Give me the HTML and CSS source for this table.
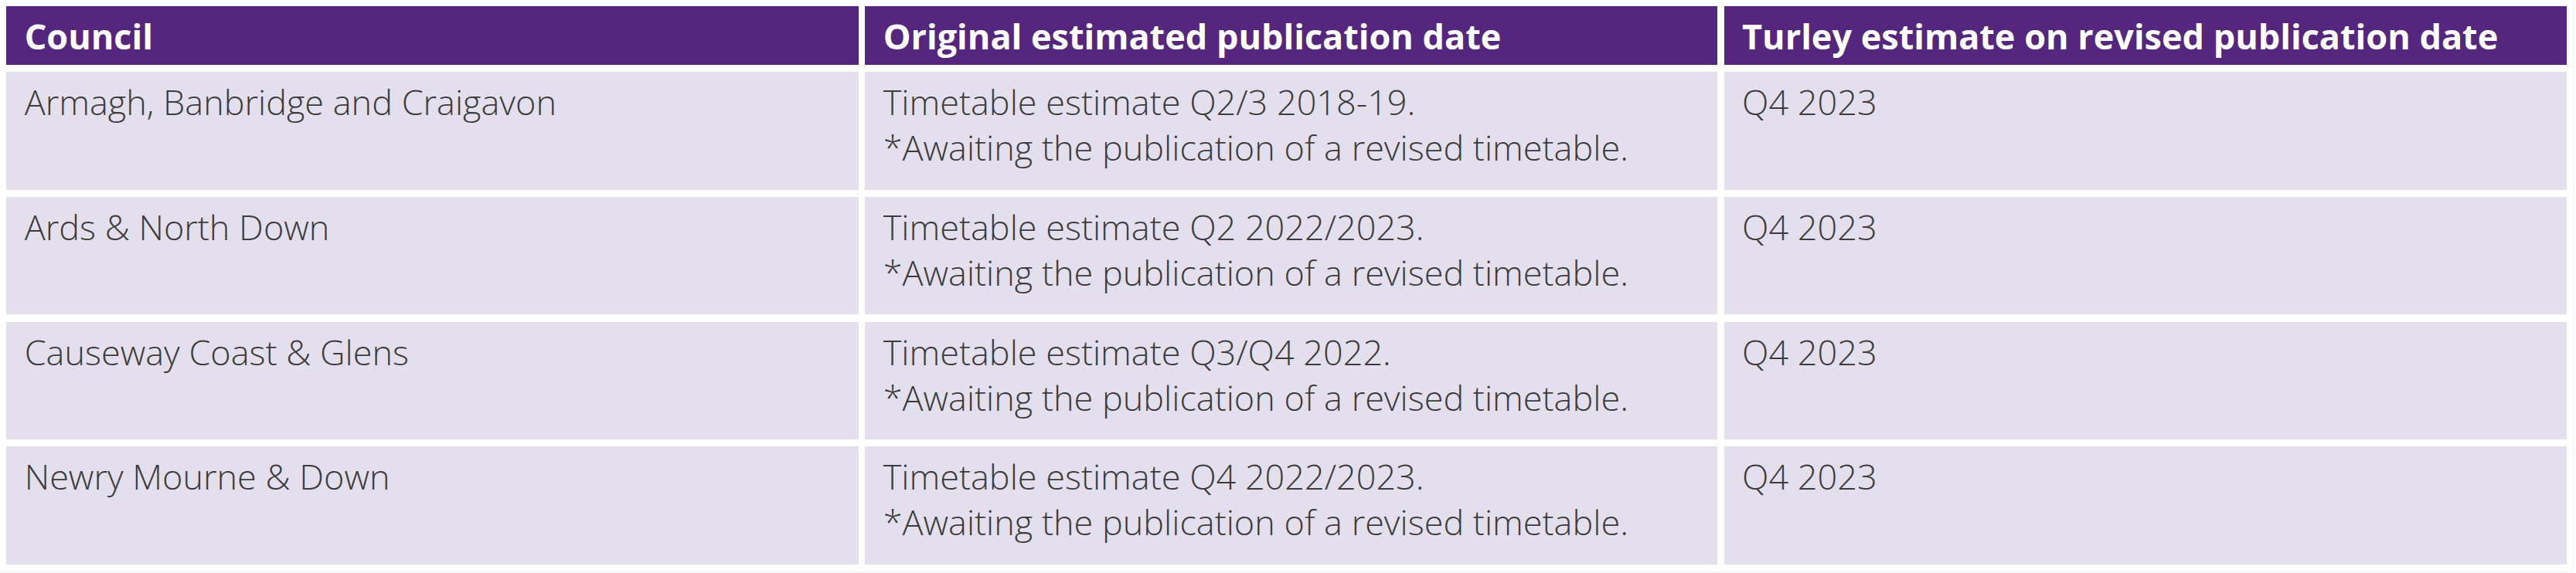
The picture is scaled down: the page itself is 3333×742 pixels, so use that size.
FILE: index.html
```html
<!DOCTYPE html>
<html lang="en">
<head>
<meta charset="utf-8">
<title>Local Development Plan timetable</title>
<link rel="stylesheet" href="styles.css">
</head>
<body>
<div class="table" role="table">
  <div class="cell head" role="columnheader">Council</div>
  <div class="cell head" role="columnheader">Original estimated publication date</div>
  <div class="cell head" role="columnheader">Turley estimate on revised publication date</div>

  <div class="cell" role="cell">Armagh, Banbridge and Craigavon</div>
  <div class="cell" role="cell">Timetable estimate Q2/3 2018-19.<br>*Awaiting the publication of a revised timetable.</div>
  <div class="cell" role="cell">Q4 2023</div>

  <div class="cell" role="cell">Ards &amp; North Down</div>
  <div class="cell" role="cell">Timetable estimate Q2 2022/2023.<br>*Awaiting the publication of a revised timetable.</div>
  <div class="cell" role="cell">Q4 2023</div>

  <div class="cell" role="cell">Causeway Coast &amp; Glens</div>
  <div class="cell" role="cell">Timetable estimate Q3/Q4 2022.<br>*Awaiting the publication of a revised timetable.</div>
  <div class="cell" role="cell">Q4 2023</div>

  <div class="cell" role="cell">Newry Mourne &amp; Down</div>
  <div class="cell" role="cell">Timetable estimate Q4 2022/2023.<br>*Awaiting the publication of a revised timetable.</div>
  <div class="cell" role="cell">Q4 2023</div>
</div>
</body>
</html>
```

FILE: styles.css
```css
html, body {
  margin: 0;
  padding: 0;
  background: #ffffff;
}

.table {
  display: grid;
  grid-template-columns: 1102.7px 1103px 1090px;
  grid-template-rows: 75.7px repeat(4, 152.4px);
  column-gap: 8.35px;
  row-gap: 9.3px;
  padding: 8.3px 8.3px 9.3px 8.3px;
  width: max-content;
  border-right: 1px solid #f3f1f7;
  border-bottom: 1px solid #f3f1f7;
  font-family: "Open Sans", Lato, sans-serif;
}

.cell {
  box-sizing: border-box;
  background: #e4dfed;
  color: #3c3c3c;
  font-weight: 300;
  font-size: 45px;
  line-height: 59px;
  padding: 9px 20px 0 23.4px;
}

.head {
  background: #55267e;
  color: #ffffff;
  font-weight: 700;
  font-size: 45px;
  padding-top: 8.7px;
}
```
